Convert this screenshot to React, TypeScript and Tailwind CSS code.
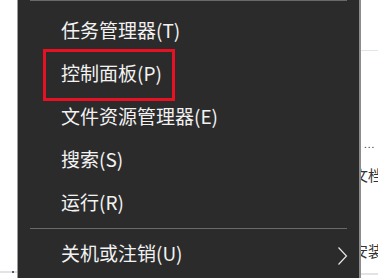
const ITEMS = ['任务管理器(T)', '控制面板(P)', '文件资源管理器(E)', '搜索(S)', '运行(R)'];

function Chevron() {
  return (
    <svg width="11" height="20" viewBox="0 0 11 20" fill="none" className="mt-[8px] text-[#e8e8e8]">
      <path d="M1.5 1.5 L9.5 10 L1.5 18.5" stroke="currentColor" strokeWidth="1.2" />
    </svg>
  );
}

export default function App() {
  return (
    <div
      className="flex h-[278px] w-[378px] overflow-hidden bg-white"
      style={{ fontFamily: '"Noto Sans CJK SC", "Noto Sans", sans-serif' }}
    >
      {/* left window behind */}
      <div className="flex w-[17px] flex-col justify-end bg-white">
        <div className="mb-[5px] flex h-[2px] items-center bg-[#e3e3e3]">
          <span className="ml-[12px] h-[2px] w-[2px] bg-[#4a5a78]" />
        </div>
      </div>
      <div className="w-px bg-[#9a9a9a]" />

      {/* context menu */}
      <div className="flex w-[341px] flex-col bg-[#2b2b2b] text-[19px] text-[#f2f2f2]">
        <div className="mx-3 h-px bg-[#6a6a6a]" />
        <div className="mt-[7px] flex flex-col">
          {ITEMS.map((label, i) => (
            <div key={label} className="relative flex h-[43px] items-center pl-[43px]">
              {i === 1 && (
                <div className="absolute left-[25px] top-[-2px] h-[52px] w-[132px] border-[3px] border-[#e81123]" />
              )}
              <span className="leading-none">{label}</span>
            </div>
          ))}
        </div>
        <div className="mx-3 mt-[5px] h-px bg-[#6a6a6a]" />
        <div className="flex h-[46px] items-center justify-between pl-[43px] pr-[11px]">
          <span className="leading-none">关机或注销(U)</span>
          <Chevron />
        </div>
      </div>

      <div className="w-[2px] bg-[#8c8c8c]" />

      {/* right window behind */}
      <div className="flex w-[17px] flex-col overflow-hidden bg-white text-[15px] text-[#333]">
        <div className="mt-[50px] h-px bg-[#dfe6e6]" />
        <div className="mt-[88px] pl-[3px] text-[10px] leading-none tracking-[1px]">...</div>
        <div className="mt-[18px] ml-[-8px] whitespace-nowrap leading-none">文档</div>
        <div className="mt-[61px] ml-[-8px] whitespace-nowrap leading-none">安装</div>
        <div className="mt-auto mb-[3px] h-[2px] bg-[#e3e3e3]" />
      </div>
    </div>
  );
}
